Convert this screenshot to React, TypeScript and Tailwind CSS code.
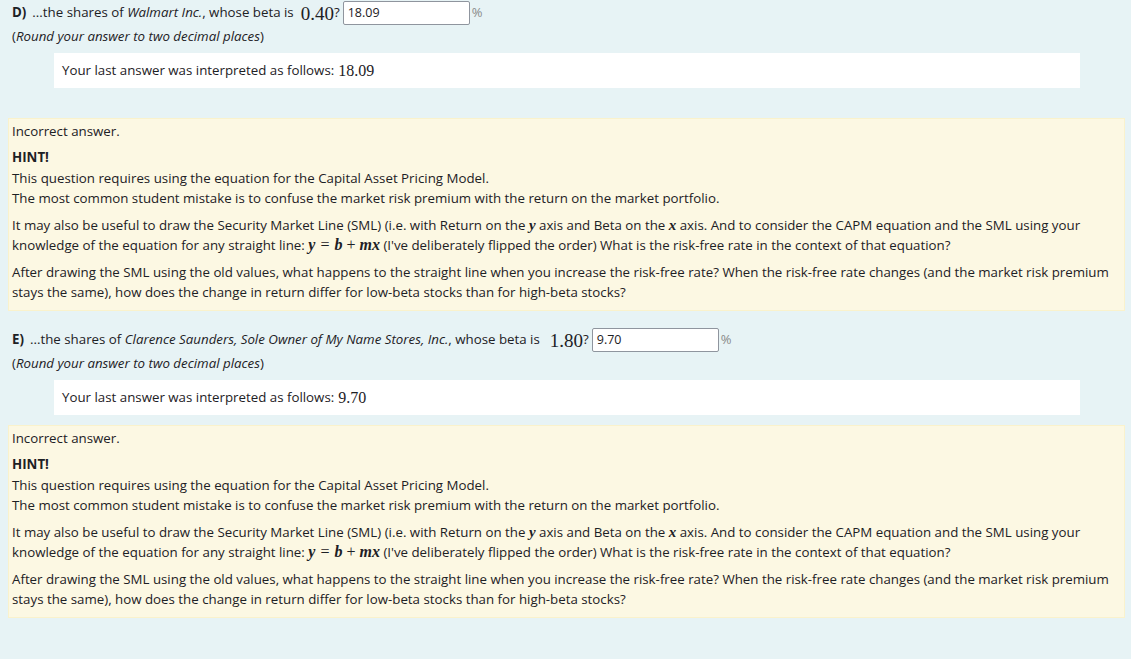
import React from "react";

const M: React.FC<{ children: React.ReactNode }> = ({ children }) => (
  <span className="font-['Liberation_Serif',serif] italic font-semibold text-[15px]">{children}</span>
);

interface QuestionProps {
  letter: string;
  company: string;
  beta: string;
  answer: string;
  hintGap: string;
  betaGap: string;
}

const Hint: React.FC = () => (
  <div className="bg-[#fcf8e3] border border-[#faf2cc] ml-2 mr-[6px] pl-[3px] pr-3 pt-[2px] pb-[8px] leading-5">
    <div>Incorrect answer.</div>
    <div className="mt-[6px] font-bold">HINT!</div>
    <div className="mt-px">This question requires using the equation for the Capital Asset Pricing Model.</div>
    <div>The most common student mistake is to confuse the market risk premium with the return on the market portfolio.</div>
    <p className="mt-[7px]">
      It may also be useful to draw the Security Market Line (SML) (i.e. with Return on the <M>y</M> axis and Beta on the{" "}
      <M>x</M> axis. And to consider the CAPM equation and the SML using your knowledge of the equation for any straight
      line:{" "}
      <span className="font-['Liberation_Serif',serif] text-[16px]">
        <i className="font-bold">y</i>
        <span className="mx-[5px]">=</span>
        <i className="font-bold">b</i>
        <span className="mx-[4px]">+</span>
        <i className="font-bold">mx</i>
      </span>{" "}
      (I've deliberately flipped the order) What is the risk-free rate in the context of that equation?
    </p>
    <p className="mt-[7px]">
      After drawing the SML using the old values, what happens to the straight line when you increase the risk-free rate?
      When the risk-free rate changes (and the market risk premium stays the same), how does the change in return differ
      for low-beta stocks than for high-beta stocks?
    </p>
  </div>
);

const Question: React.FC<QuestionProps> = ({ letter, company, beta, answer, hintGap, betaGap }) => (
  <div>
    <div className="flex items-center h-[26px] pl-3">
      <span className="font-bold mr-[6px]">{letter})</span>
      <span>
        ...the shares of <i>{company}</i>, whose beta is
      </span>
      <span className={`font-['Liberation_Serif',serif] text-[19px] leading-none ${betaGap}`}>{beta}</span>
      <span>?</span>
      <div className="ml-[3px] w-[127px] h-[24px] border border-[#8f959e] rounded-[2px] bg-white flex items-center pl-[4px] text-[12.5px]">
        {answer}
      </div>
      <span className="ml-[2px] text-[#8a8a8a] text-[13px]">%</span>
    </div>
    <div className="pl-3 leading-5">
      (<i>Round your answer to two decimal places</i>)
    </div>
    <div className="mt-[7px] ml-[54px] w-[1026px] h-[35px] bg-white flex items-center pl-2">
      Your last answer was interpreted as follows:
      <span className="font-['Liberation_Serif',serif] text-[16px] ml-1">{answer}</span>
    </div>
    <div className={hintGap} />
    <Hint />
  </div>
);

const App: React.FC = () => {
  return (
    <div className="w-[1131px] h-[659px] bg-[#e7f3f5] text-[#1d2125] text-[13.3px] font-['Open_Sans',sans-serif] overflow-hidden">
      <Question letter="D" company="Walmart Inc." beta="0.40" answer="18.09" hintGap="h-[30px]" betaGap="ml-[7px]" />
      <div className="h-[16px]" />
      <Question
        letter="E"
        company="Clarence Saunders, Sole Owner of My Name Stores, Inc."
        beta="1.80"
        answer="9.70"
        hintGap="h-[10px]"
        betaGap="ml-[10px]"
      />
    </div>
  );
};

export default App;
